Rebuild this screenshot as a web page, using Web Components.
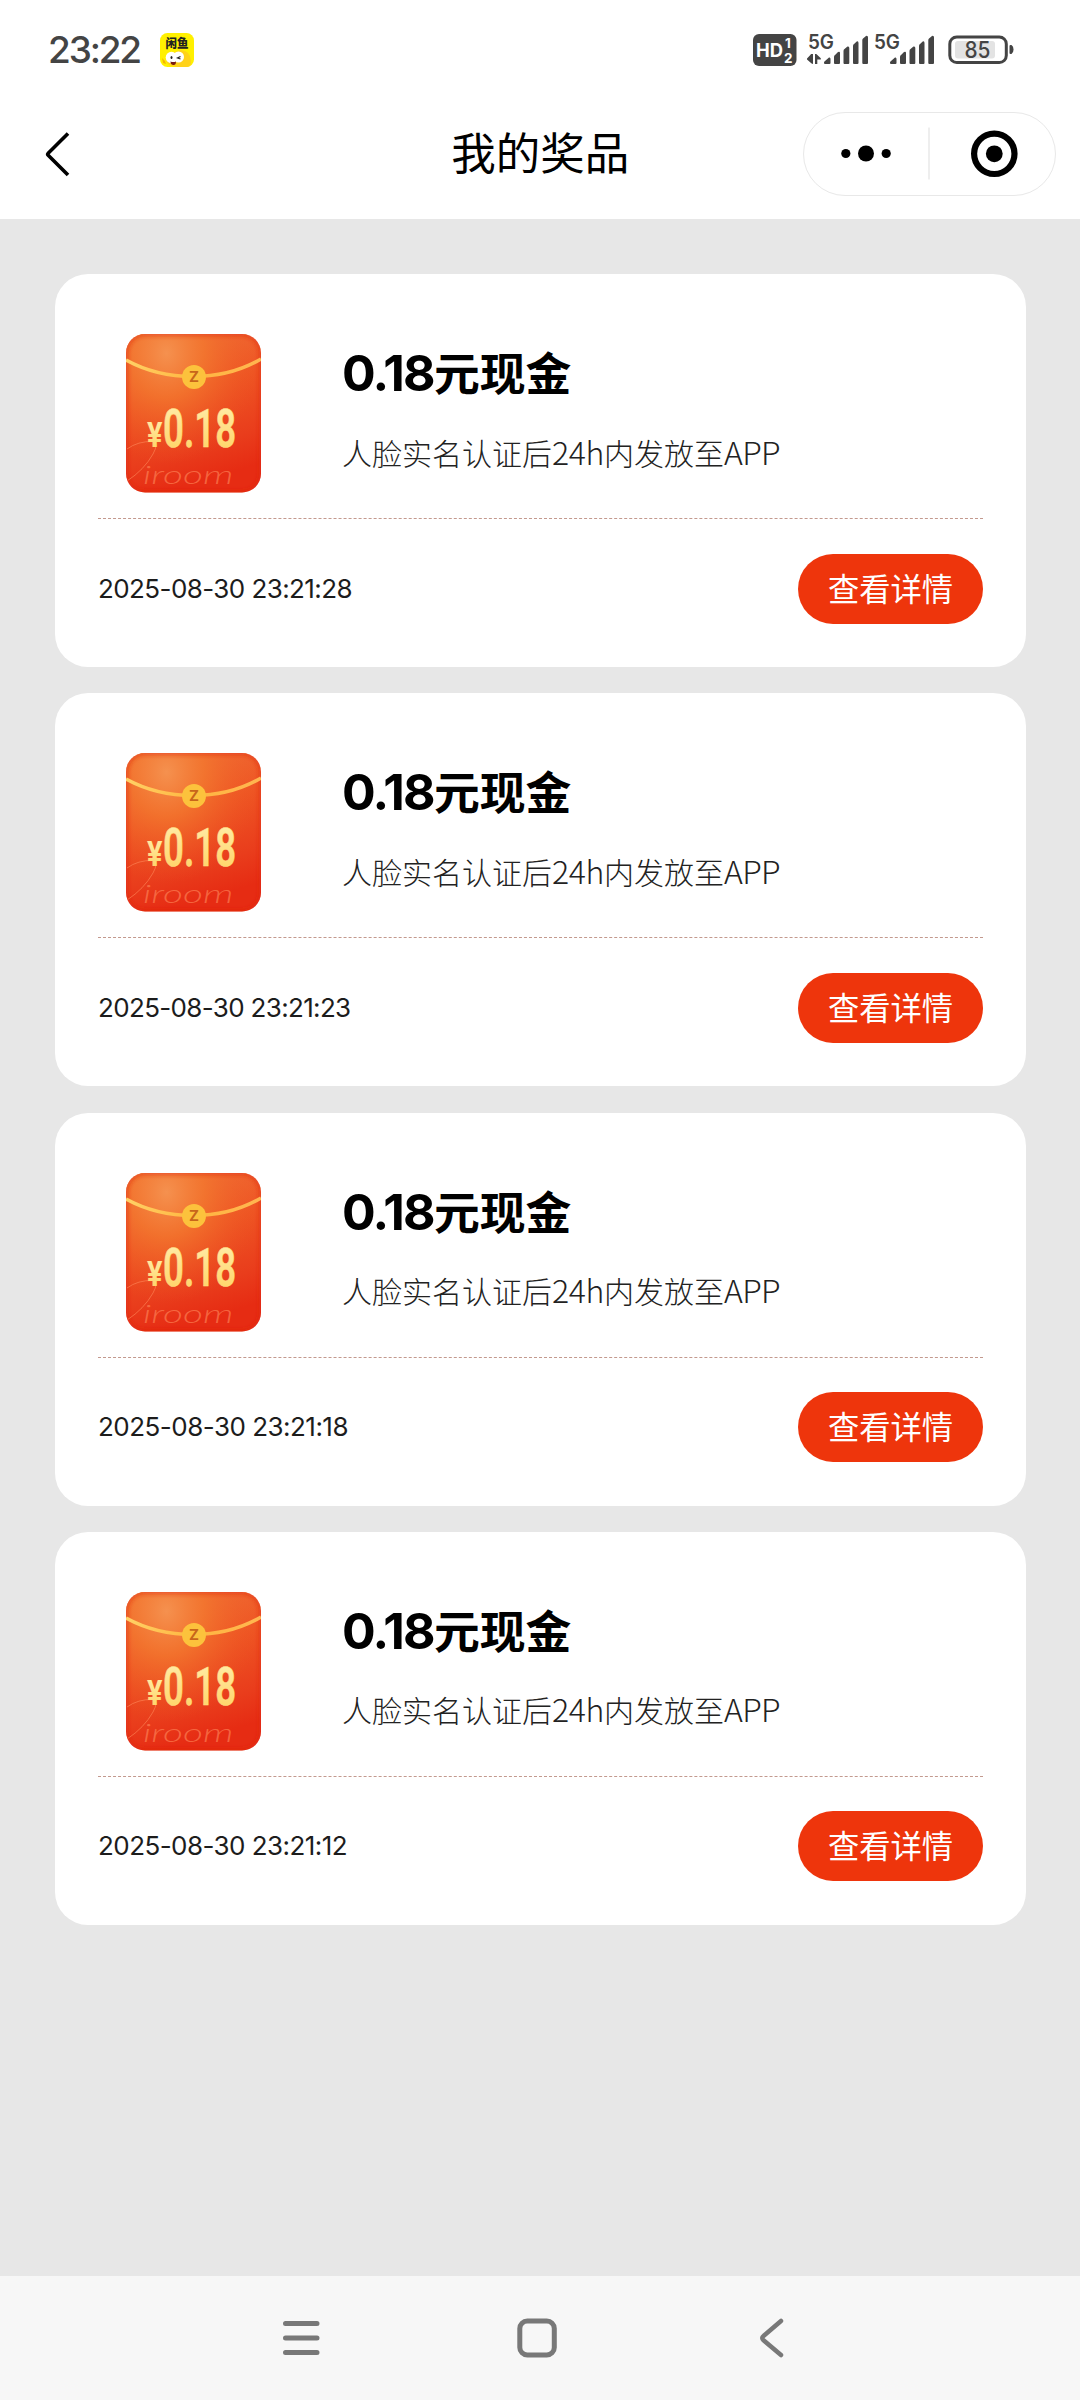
<!DOCTYPE html>
<html lang="zh-CN">
<head>
<meta charset="utf-8">
<title>我的奖品</title>
<style>
html,body{margin:0;padding:0}
body{width:1080px;height:2400px;overflow:hidden;background:#e7e7e7;font-family:"Noto Sans CJK SC",sans-serif;color:#000}
</style>
</head>
<body>
<prize-app></prize-app>
<script>
const define=(name,html,setup)=>customElements.define(name,class extends HTMLElement{
  connectedCallback(){
    if(this.shadowRoot)return;
    this.attachShadow({mode:'open'});
    const t=document.createElement('template');
    t.innerHTML=typeof html==='function'?html(this):html;
    this.shadowRoot.append(t.content.cloneNode(true));
    if(setup)setup(this);
  }
});

/* A text run whose letter spacing is adjusted to fill the given width */
define('fit-text',`<style>:host{display:inline-block;white-space:nowrap}span{display:inline-block}</style><span><slot></slot></span>`,el=>{
  const s=el.shadowRoot.querySelector('span'),w=+el.getAttribute('width');
  const n=[...el.textContent].length;
  const now=s.getBoundingClientRect().width;
  s.style.letterSpacing=((w-now)/n)+'px';
});

define('signal-bars',el=>`<style>:host{display:block;width:66px;height:34px}svg{display:block;overflow:visible}text{font:600 19.5px Inter,sans-serif;fill:#444}</style>
<svg width="66" height="34" viewBox="0 0 66 34"><text x="1" y="15.6" textLength="26" lengthAdjust="spacingAndGlyphs">5G</text>
<g fill="#444">${el.hasAttribute('data')?'<path d="M0 25.5L3.8 21.6V21H6V31L4.6 30.6L0 26.6ZM8 21H9.3L13.8 25.2V26.6H10.3V31H8Z"/>':''}
<path d="M17 29.5Q17 28.5 18 28L22 24.5Q23.5 24 23.5 26V30Q23.5 31 22.5 31H18Q17 31 17 30ZM27 24Q27 22.5 28 22L31 19Q33 18 33 20V30Q33 31 32 31H28Q27 31 27 30ZM36.5 18Q36.5 16.5 37.5 16L40.5 13.5Q42.3 13 42.3 15V30Q42.3 31 41.3 31H37.5Q36.5 31 36.5 30ZM46 13Q46 11.5 47 11L50 8.3Q51.5 8 51.5 10V30Q51.5 31 50.5 31H47Q46 31 46 30ZM55.3 7Q55.3 6 56 5.5L59 3Q61 2.3 61 4.5V30Q61 31 60 31H56.3Q55.3 31 55.3 30Z"/></g></svg>`);

define('status-bar',`<style>
:host{display:flex;align-items:center;height:100px;padding-left:48px;box-sizing:border-box}
.time{font:500 37px/40px Inter,sans-serif;color:#444}
.app{margin-left:20px}
.r{display:flex;align-items:center;margin-left:559px}
svg{display:block}
.hd{margin-right:10px}.bat{margin-left:9px}
text{font-family:Inter,sans-serif}
</style>
<fit-text class="time" width="92">23:22</fit-text>
<svg class="app" width="34" height="34" viewBox="0 0 34 34"><rect width="34" height="34" rx="7.5" fill="#fff000"/>
<path d="M21 17Q31 18 31 30Q31 33 27 34H18Q7 34 6 27L12 20Z" fill="#ffd21a"/>
<path d="M2 25Q5 27 6 31L3 30Z" fill="#f6b600"/>
<circle cx="11.5" cy="24.5" r="5.8" fill="#fff"/><circle cx="18.5" cy="24" r="5.5" fill="#fff"/>
<ellipse cx="11.5" cy="24.5" rx="1" ry="1.6" fill="#222"/><path d="M20.5 23.5L17.5 25L20.5 26" stroke="#222" stroke-width="1.2" fill="none"/>
<path d="M10.5 28.5Q13.5 29.5 16 28.5Q16 32.5 13 32Q10.5 31.5 10.5 28.5Z" fill="#7a1b12"/>
<text x="5.5" y="14.8" textLength="23" lengthAdjust="spacingAndGlyphs" style="font:800 12px 'Noto Sans CJK SC',sans-serif" fill="#222">闲鱼</text></svg>
<div class="r">
<svg class="hd" width="44" height="34" viewBox="0 0 44 34"><rect y="1" width="43.5" height="32" rx="6" fill="#444"/>
<text x="3" y="23.5" font-size="18.5" font-weight="700" fill="#fff" textLength="27" lengthAdjust="spacingAndGlyphs">HD</text>
<text x="32" y="15" font-size="13.5" font-weight="700" fill="#fff">1</text><text x="31" y="29.6" font-size="13.5" font-weight="700" fill="#fff">2</text></svg>
<signal-bars data></signal-bars><signal-bars></signal-bars>
<svg class="bat" width="66" height="30" viewBox="0 0 66 30"><rect x="1.8" y="2" width="56.5" height="25.6" rx="7" fill="none" stroke="#444" stroke-width="3"/><rect x="7" y="6" width="40" height="17.5" rx="3" fill="#e3e3e3"/><path d="M61.5 11Q61.5 10 62.5 10H63.5Q65.5 11 65.5 14.5Q65.5 18 63.5 19H62.5Q61.5 19 61.5 18Z" fill="#444"/>
<text x="16.5" y="23" font-size="23" font-weight="500" fill="#444" textLength="26" lengthAdjust="spacingAndGlyphs">85</text></svg>
</div>`);

define('title-bar',`<style>
:host{display:grid;grid-template-columns:1fr auto 1fr;align-items:center;height:107.5px;padding:0 24.5px 0 43px}
h1{margin:0 18px 0 0;font-weight:400;font-size:44.5px;line-height:60px;padding-bottom:6px}
.caps{justify-self:end;box-sizing:border-box;width:253px;height:84px;border:1.5px solid #e8e8e8;border-radius:42px}
svg{display:block}
</style>
<svg width="30" height="50" viewBox="0 0 30 50"><path d="M25 4.5L5.2 24.2Q4.2 25.2 5.2 26.2L25 46" fill="none" stroke="#000" stroke-width="3.6"/></svg>
<h1><slot></slot></h1>
<div class="caps"><svg width="250" height="81" viewBox="1.5 1.5 250 81"><circle cx="43.3" cy="42" r="4.6"/><circle cx="63.5" cy="42" r="8"/><circle cx="83.7" cy="42" r="4.6"/><path d="M126.5 16V68" stroke="#ddd" stroke-width="1"/><circle cx="191.8" cy="42.3" r="20.2" fill="none" stroke="#000" stroke-width="6.2"/><circle cx="191.8" cy="42.3" r="8.4"/></svg></div>`);

define('red-packet',`<style>:host{display:block;width:135px;height:159px}svg{display:block;overflow:visible}</style>
<svg width="135" height="159" viewBox="0 0 135 159">
<defs><linearGradient id="b" x1="0" y1="0" x2=".25" y2="1"><stop offset="0" stop-color="#f0743a"/><stop offset=".45" stop-color="#ee5523"/><stop offset=".8" stop-color="#e93d1c"/><stop offset="1" stop-color="#e62c13"/></linearGradient>
<radialGradient id="g" cx=".3" cy=".12" r=".7"><stop offset="0" stop-color="#f5914f"/><stop offset=".4" stop-color="#f3792f" stop-opacity=".75"/><stop offset="1" stop-color="#ee5523" stop-opacity="0"/></radialGradient>
<linearGradient id="y" x1="0" y1="0" x2="0" y2="1"><stop offset="0" stop-color="#fff0b0"/><stop offset="1" stop-color="#ffcf5c"/></linearGradient>
<linearGradient id="s" x1="0" x2="1"><stop offset="0" stop-color="#ffd166"/><stop offset=".5" stop-color="#ffb640"/><stop offset="1" stop-color="#ffb650"/></linearGradient>
<filter id="f" x="-10%" y="-10%" width="120%" height="120%"><feGaussianBlur stdDeviation="2"/></filter>
<clipPath id="c"><rect width="135" height="158.5" rx="19"/></clipPath></defs>
<g clip-path="url(#c)"><rect width="135" height="159" fill="url(#b)"/><rect width="135" height="159" fill="url(#g)"/>
<rect width="135" height="158.5" rx="19" fill="none" stroke="#e0240f" stroke-opacity=".6" stroke-width="4" filter="url(#f)"/>
<path d="M0 26Q30 42.5 67 42.5Q105 42.5 135 25" fill="none" stroke="url(#s)" stroke-width="3.6"/>
<path d="M1 115Q12 107 27 107.5Q33 109 27 120Q18 136 1 147" fill="none" stroke="#ff8a5c" stroke-opacity=".6" stroke-width="1"/></g>
<text transform="translate(17 150) scale(1.5 1)" style="font:italic 300 26px Lato,sans-serif" fill="#ff8a5c" fill-opacity=".6">iroom</text>
<circle cx="68" cy="43" r="12" fill="#fcc23c"/>
<text x="68" y="48.4" text-anchor="middle" style="font:700 15px Inter,sans-serif" fill="#c8661a">Z</text>
<text transform="translate(21 113) scale(.8 1)" style="font:700 36px Roboto,sans-serif" fill="url(#y)">¥</text>
<text transform="translate(37 113) scale(.69 1)" style="font:600 53px Roboto,sans-serif" fill="url(#y)" stroke="#ffe08a" stroke-width=".5">0.18</text>
</svg>`);

define('detail-button',`<style>:host{display:block}button{all:unset;box-sizing:border-box;display:flex;align-items:center;justify-content:center;width:185px;height:70px;padding-bottom:2px;border-radius:35px;background:#ee350c;color:#fff;font-size:31.3px;line-height:44px;font-family:"Noto Sans CJK SC",sans-serif}</style><button><slot></slot></button>`);

define('prize-card',`<style>
:host{display:block;box-sizing:border-box;width:971px;height:393px;border-radius:33px;background:#fff;padding:60px 43px 0}
.top{display:flex;height:184px;border-bottom:1px dashed #c3998e;padding-left:28px}
.copy{margin-left:81px;padding-top:7px}
.name{font-weight:700;font-size:45.8px;line-height:60px;height:60px;white-space:nowrap}
.desc{margin-top:27.5px;font-weight:300;font-size:30px;line-height:44px;height:44px;white-space:nowrap;color:#222}
.bottom{display:flex;justify-content:space-between;align-items:center;height:139px}
.date{font:400 26px/40px Inter,sans-serif;color:#1c1c1c}
</style>
<div class="top"><red-packet></red-packet><div class="copy"><div class="name"><slot name="name"></slot></div><div class="desc"><slot name="desc"></slot></div></div></div>
<div class="bottom"><div class="date"><slot name="date"></slot></div><detail-button>查看详情</detail-button></div>`);

define('nav-bar',`<style>:host{display:flex;height:124px;background:#f7f7f7}svg{display:block}</style>
<svg width="1080" height="124" viewBox="0 0 1080 124" fill="none" stroke="#787878" stroke-width="5" stroke-linecap="round"><path d="M285.5 47.5H317M285.5 62H317M285.5 76.5H317"/><rect x="519.8" y="45" width="34.5" height="34" rx="7.5"/><path d="M781 45L763.5 60Q761 62 763.5 64.2L781 79" stroke-width="4.5"/></svg>`);

define('prize-app',`<style>
:host{display:flex;flex-direction:column;width:1080px;height:2400px}
header{background:#fff;height:219px;display:flex;flex-direction:column}
title-bar{box-sizing:border-box}
main{flex:1;display:flex;flex-direction:column;gap:26.33px;padding:55px 54px 0 55px}
</style>
<header><status-bar></status-bar><title-bar>我的奖品</title-bar></header>
<main>${[['28',254],['23',252.5],['18',250],['12',249]].map(([s,w])=>`<prize-card><span slot="name"><fit-text width="92" style="font:700 50px/60px Inter,sans-serif">0.18</fit-text>元现金</span><span slot="desc">人脸实名认证后<fit-text width="52" style="font-size:32px">24h</fit-text>内发放至<fit-text width="56" style="font-size:32px">APP</fit-text></span><fit-text slot="date" width="${w}">2025-08-30 23:21:${s}</fit-text></prize-card>`).join('')}</main>
<nav-bar></nav-bar>`);
</script>
</body>
</html>
